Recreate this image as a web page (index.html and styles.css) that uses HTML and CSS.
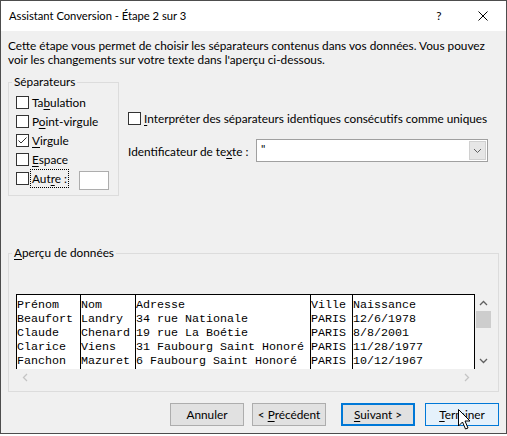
FILE: index.html
```html
<!DOCTYPE html>
<html lang="fr">
<head>
<meta charset="utf-8">
<title>Assistant Conversion</title>
<link rel="stylesheet" href="styles.css">
</head>
<body>
<div class="window">
  <div class="titlebar">
    <span class="title">Assistant Conversion - Étape 2 sur 3</span>
    <span class="help">?</span>
    <span class="close"><svg width="10" height="10" viewBox="0 0 10 10"><path d="M0.5 0.5L9.5 9.5M9.5 0.5L0.5 9.5" stroke="#000" stroke-width="1" fill="none"/></svg></span>
  </div>
  <div class="content">
    <p class="desc">Cette étape vous permet de choisir les séparateurs contenus dans vos données. Vous pouvez<br>voir les changements sur votre texte dans l'aperçu ci-dessous.</p>
    <div class="toprow">
      <fieldset class="group sep">
        <legend>Séparateurs</legend>
        <div class="cbrow"><span class="cb"></span><span class="lbl">Ta<u>b</u>ulation</span></div>
        <div class="cbrow"><span class="cb"></span><span class="lbl">P<u>o</u>int-virgule</span></div>
        <div class="cbrow"><span class="cb"><svg width="11" height="11" viewBox="0 0 11 11"><path d="M1.5 5.5L4 8L9.5 2.5" stroke="#333" stroke-width="1" fill="none"/></svg></span><span class="lbl"><u>V</u>irgule</span></div>
        <div class="cbrow"><span class="cb"></span><span class="lbl"><u>E</u>space</span></div>
        <div class="cbrow"><span class="cb"></span><span class="lbl focus">Aut<u>r</u>e :</span><span class="textbox"></span></div>
      </fieldset>
      <div class="options">
        <div class="optrow"><span class="cb"></span><span class="lbl"><u>I</u>nterpréter des séparateurs identiques consécutifs comme uniques</span></div>
        <div class="comborow">
          <span class="combolbl">Identificateur de te<u>x</u>te :</span>
          <span class="combo">
            <span class="combotext">"</span>
            <span class="combobtn"><svg width="9" height="6" viewBox="0 0 9 6"><path d="M1 1L4.5 4.5L8 1" stroke="#606060" stroke-width="1" fill="none"/></svg></span>
          </span>
        </div>
      </div>
    </div>
    <fieldset class="group preview">
      <legend><u>A</u>perçu de données</legend>
      <div class="pv">
        <div class="data">
          <div class="col c1">Prénom
Beaufort
Claude
Clarice
Fanchon</div>
          <div class="col c2">Nom
Landry
Chenard
Viens
Mazuret</div>
          <div class="col c3">Adresse
34 rue Nationale
19 rue La Boétie
31 Faubourg Saint Honoré
6 Faubourg Saint Honoré</div>
          <div class="col c4">Ville
PARIS
PARIS
PARIS
PARIS</div>
          <div class="col c5">Naissance
12/6/1978
8/8/2001
11/28/1977
10/12/1967</div>
        </div>
        <div class="vs">
          <span class="arrow"><svg width="9" height="6" viewBox="0 0 9 6"><path d="M1 5L4.5 1.5L8 5" stroke="#606060" stroke-width="1.3" fill="none"/></svg></span>
          <span class="thumb"></span>
          <span class="vspace"></span>
          <span class="arrow"><svg width="9" height="6" viewBox="0 0 9 6"><path d="M1 1L4.5 4.5L8 1" stroke="#606060" stroke-width="1.3" fill="none"/></svg></span>
        </div>
        <div class="hs">
          <span class="arrow"><svg width="6" height="9" viewBox="0 0 6 9"><path d="M5 1L1.5 4.5L5 8" stroke="#c4c4c4" stroke-width="1.3" fill="none"/></svg></span>
          <span class="arrow"><svg width="6" height="9" viewBox="0 0 6 9"><path d="M1 1L4.5 4.5L1 8" stroke="#c4c4c4" stroke-width="1.3" fill="none"/></svg></span>
        </div>
        <div class="corner"></div>
      </div>
    </fieldset>
    <div class="buttons">
      <span class="btn b-cancel"><span>Annuler</span></span>
      <span class="btn b-prev"><span>&lt; <u>P</u>récédent</span></span>
      <span class="btn b-next default"><span><u>S</u>uivant &gt;</span></span>
      <span class="btn b-finish hover"><span><u>T</u>erminer</span></span>
    </div>
  </div>
</div>
<svg class="cursor" width="13" height="21" viewBox="0 0 13 21"><path d="M0.5 0.5L0.5 17L4.5 13L7.5 20L10 19L7 12L12 12Z" fill="#fff" stroke="#000" stroke-width="1" stroke-linejoin="miter"/></svg>
</body>
</html>
```

FILE: styles.css
```css
* { box-sizing: border-box; }
html, body { margin: 0; padding: 0; }
body {
  width: 507px;
  height: 436px;
  background: #fff;
  font-family: Lato, "Noto Sans", sans-serif;
  font-size: 11.8px;
  color: #000;
  overflow: hidden;
  position: relative;
}
u { text-decoration: underline; text-underline-offset: 2px; }

.window {
  width: 507px;
  height: 434px;
  border: 1px solid #4d4d4d;
  background: #f0f0f0;
  display: flex;
  flex-direction: column;
}
.titlebar {
  height: 30px;
  flex-shrink: 0;
  background: #fff;
  display: flex;
  align-items: center;
  padding-left: 8px;
}
.title { flex: 1; line-height: 16px; font-size: 11.2px; }
.help { width: 10px; text-align: center; margin-right: 34px; line-height: 16px; }
.close { width: 10px; height: 10px; margin-right: 18px; display: flex; }

.content {
  padding: 7px 6px 0 7px;
  display: flex;
  flex-direction: column;
}
.desc { margin: 0; line-height: 14px; height: 28px; white-space: nowrap; padding-top: 1px; }

.toprow { display: flex; align-items: flex-start; margin-top: 8px; }

.group {
  margin: 0;
  border: 1px solid #dcdcdc;
  min-width: 0;
}
.group legend {
  padding: 0 2px;
  margin-left: -4px;
  line-height: 16px;
}
.sep {
  width: 111px;
  flex-shrink: 0;
  padding: 3px 0 7px 7px;
}
.cbrow { display: flex; align-items: center; height: 19px; }
.cb {
  width: 13px;
  height: 13px;
  flex-shrink: 0;
  border: 1px solid #333;
  background: #fff;
  display: flex;
  align-items: center;
  justify-content: center;
}
.lbl {
  margin-left: 1px;
  padding: 0 1px;
  border: 1px solid transparent;
  line-height: 17px;
  white-space: nowrap;
}
.lbl.focus { border: 1px dotted #000; }
.textbox {
  width: 30px;
  height: 19px;
  margin-left: 10px;
  margin-top: 4px;
  border: 1px solid #adadad;
  background: #fff;
  flex-shrink: 0;
}

.options { margin-left: 9px; padding-top: 36px; flex: 1; }
.optrow { display: flex; align-items: center; height: 17px; }
.comborow { display: flex; align-items: center; height: 23px; margin-top: 12px; }
.combolbl { width: 128px; flex-shrink: 0; white-space: nowrap; line-height: 16px; margin-top: 2px; }
.combo {
  width: 232px;
  height: 23px;
  border: 1px solid #a0a0a0;
  background: #fff;
  display: flex;
}
.combotext { flex: 1; padding-left: 4px; line-height: 18px; }
.combobtn {
  width: 17px;
  margin: 1px;
  background: #e6e6e6;
  border: 1px solid #d0d0d0;
  display: flex;
  align-items: center;
  justify-content: center;
}

.preview {
  width: 491px;
  margin-top: 49px;
  padding: 33px 6px 5px 7px;
}
.pv {
  display: grid;
  grid-template-columns: 459px 17px;
  grid-template-rows: 75px 17px;
}
.data {
  border: 1px solid #000;
  border-bottom: none;
  background: #fff;
  display: flex;
  overflow: hidden;
  font-family: "Liberation Mono", monospace;
  font-size: 11.67px;
  line-height: 14px;
}
.col { white-space: pre; padding-top: 3px; flex-shrink: 0; }
.c1 { width: 63px; }
.c2 { width: 55px; border-left: 1px solid #000; }
.c3 { width: 175px; border-left: 1px solid #000; }
.c4 { width: 42px; border-left: 1px solid #000; }
.c5 { flex: 1; border-left: 1px solid #000; }

.vs { display: flex; flex-direction: column; align-items: center; }
.vs .arrow { height: 17px; width: 17px; display: flex; align-items: center; justify-content: center; }
.thumb { width: 15px; height: 17px; background: #cdcdcd; }
.vspace { flex: 1; }
.hs { display: flex; justify-content: space-between; }
.hs .arrow { width: 17px; height: 17px; display: flex; align-items: center; justify-content: center; }

.buttons {
  display: flex;
  justify-content: flex-end;
  margin-top: 11px;
  padding-right: 1px;
}
.btn {
  width: 74px;
  height: 23px;
  border: 1px solid #adadad;
  background: #e1e1e1;
  display: flex;
  align-items: center;
  justify-content: center;
  white-space: nowrap;
  line-height: 16px;
}
.b-cancel { margin-right: 8px; }
.b-prev { margin-right: 15px; }
.b-next { margin-right: 10px; }
.btn.default { border: 2px solid #0078d7; }
.btn.hover { background: #e5f1fb; border: 1px solid #0078d7; }

.cursor { position: absolute; left: 458px; top: 409px; }
```
